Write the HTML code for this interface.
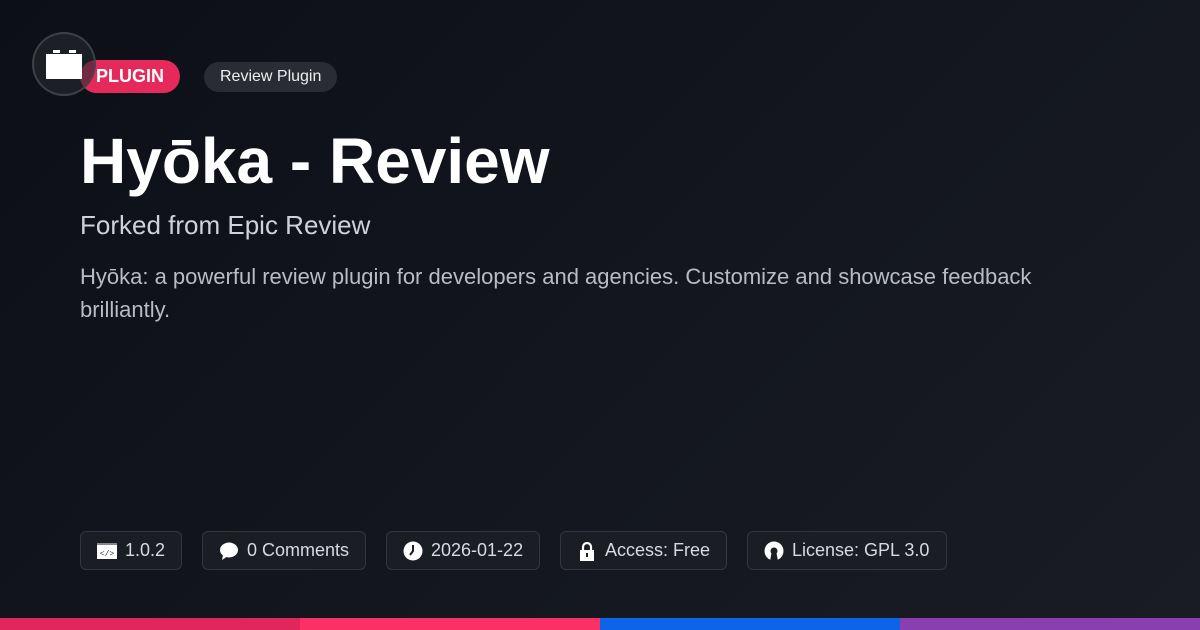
<!DOCTYPE html>
<html><head><meta charset="utf-8"><style>
*{margin:0;padding:0;box-sizing:border-box}
body{width:1200px;height:630px;overflow:hidden;position:relative;font-family:"Liberation Sans",sans-serif;background:linear-gradient(135deg,#0d0f17 0%,#141720 60%,#1a1c24 100%);color:#fff}
.logo{position:absolute;z-index:2;left:32px;top:32px;width:64px;height:64px;border-radius:50%;background:rgba(40,42,50,0.6);border:2px solid rgba(70,72,80,0.8)}
.logo .b{position:absolute;left:12px;top:20px;width:36px;height:25px;background:#fff}
.logo .s1,.logo .s2{position:absolute;top:16px;width:7px;height:3px;background:#fff}
.s1{left:19px}.s2{left:35px}
.tag{position:absolute;left:80px;top:60px;height:33px;padding:0 16px;border-radius:17px;background:#e5295a;font-weight:bold;font-size:18px;line-height:33px}
.cat{position:absolute;left:204px;top:62px;height:30px;padding:0 16px;border-radius:15px;background:#2a2c33;font-size:16px;line-height:30px;color:#eee}
h1{position:absolute;left:80px;top:124px;font-size:64px;font-weight:bold}
.sub{position:absolute;left:80px;top:210px;font-size:26px;color:#d0d2d8}
.desc{position:absolute;left:80px;top:260px;font-size:22px;line-height:33px;color:#b9bcc4;width:1000px}
.m{position:absolute;top:531px;height:39px;border:1px solid #34363e;border-radius:6px;background:#1b1d25;font-size:18px;line-height:37px;color:#d8dae0;padding-left:44px}
.m svg{position:absolute;left:16px;top:9px}
.bar{position:absolute;top:618px;height:12px;width:300px}
</style></head><body>
<div class="logo"><div class="s1"></div><div class="s2"></div><div class="b"></div></div>
<div class="tag">PLUGIN</div>
<div class="cat">Review Plugin</div>
<h1>Hyōka - Review</h1>
<div class="sub">Forked from Epic Review</div>
<div class="desc">Hyōka: a powerful review plugin for developers and agencies. Customize and showcase feedback brilliantly.</div>
<div class="m" style="left:80px;width:102px"><svg width="20" height="20" viewBox="0 0 20 20"><rect x="0" y="2" width="20" height="16" fill="#fff"/><rect x="0" y="2" width="20" height="2" fill="#888"/><text x="10" y="15" font-size="8" text-anchor="middle" fill="#333" font-family="Liberation Mono">&lt;/&gt;</text></svg>1.0.2</div>
<div class="m" style="left:202px;width:164px"><svg width="20" height="20" viewBox="0 0 20 20"><ellipse cx="10" cy="9" rx="9" ry="7.5" fill="#fff"/><path d="M4 14 L3 19 L9 15Z" fill="#fff"/></svg>0 Comments</div>
<div class="m" style="left:386px;width:154px"><svg width="20" height="20" viewBox="0 0 20 20"><circle cx="10" cy="10" r="9.5" fill="#fff"/><path d="M10 4V10L7 14" stroke="#1b1d25" stroke-width="2" fill="none"/></svg>2026-01-22</div>
<div class="m" style="left:560px;width:167px"><svg width="20" height="20" viewBox="0 0 20 20"><path d="M6 10V6a4 4 0 0 1 8 0v4" stroke="#fff" stroke-width="2.2" fill="none"/><rect x="3" y="9" width="14" height="11" fill="#fff"/><rect x="9" y="12" width="2" height="4" fill="#1b1d25"/></svg>Access: Free</div>
<div class="m" style="left:747px;width:200px"><svg width="20" height="20" viewBox="0 0 20 20"><circle cx="10" cy="10" r="9.5" fill="#fff"/><circle cx="10" cy="10" r="3.5" fill="#1b1d25"/><path d="M7.5 12 L6 20 H14 L12.5 12Z" fill="#1b1d25"/></svg>License: GPL 3.0</div>
<div class="bar" style="left:0;background:#e0265a"></div>
<div class="bar" style="left:300px;background:#fb3165"></div>
<div class="bar" style="left:600px;background:#0d64e8"></div>
<div class="bar" style="left:900px;background:#8a3fb0"></div>
</body></html>
